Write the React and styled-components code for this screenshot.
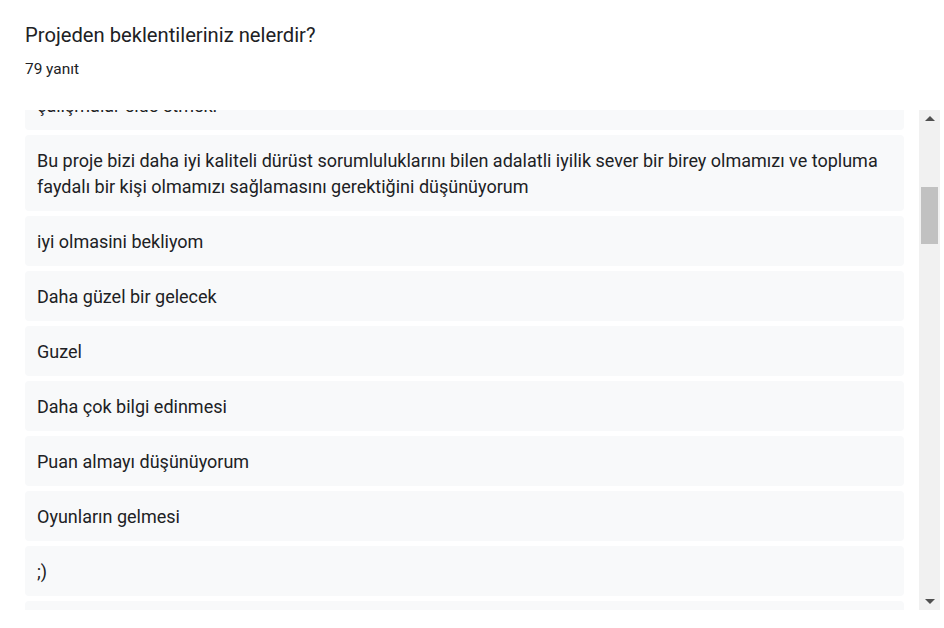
import React from 'react'
import styled, { createGlobalStyle } from 'styled-components'

const answers = [
    'çalışmalar elde etmek.',
    'Bu proje bizi daha iyi kaliteli dürüst sorumluluklarını bilen adalatli iyilik sever bir birey olmamızı ve topluma faydalı bir kişi olmamızı sağlamasını gerektiğini düşünüyorum',
    'iyi olmasini bekliyom',
    'Daha güzel bir gelecek',
    'Guzel',
    'Daha çok bilgi edinmesi',
    'Puan almayı düşünüyorum',
    'Oyunların gelmesi',
    ';)',
    'Güzel olması',
]

const App = () => {
    return (
        <>
            <GlobalStyle />
            <Page>
                <Header>
                    <Title>Projeden beklentileriniz nelerdir?</Title>
                    <Count>79 yanıt</Count>
                </Header>
                <Body>
                    <ListView>
                        <List>
                            {answers.map((a, i) => (
                                <Answer key={i}>{a}</Answer>
                            ))}
                        </List>
                    </ListView>
                    <ScrollBar>
                        <Arrow className="up" />
                        <Track>
                            <Thumb />
                        </Track>
                        <Arrow className="down" />
                    </ScrollBar>
                </Body>
            </Page>
        </>
    )
}

const GlobalStyle = createGlobalStyle`
    html, body {
        margin: 0;
        padding: 0;
        background: #fff;
    }
    body {
        font-family: Roboto, "Liberation Sans", Arial, sans-serif;
        color: #202124;
    }
`

const Page = styled.div`
    width: 944px;
    height: 628px;
    overflow: hidden;
    background: #fff;
`
const Header = styled.div`
    padding: 22px 0 0 25px;
    height: 110px;
    box-sizing: border-box;
`
const Title = styled.div`
    font-size: 20.2px;
    line-height: 26px;
    color: #202124;
`
const Count = styled.div`
    margin-top: 12px;
    font-size: 15.4px;
    line-height: 18px;
    color: #202124;
`
const Body = styled.div`
    display: flex;
    height: 500px;
`
const ListView = styled.div`
    flex: 1;
    overflow: hidden;
    padding: 0 15px 0 25px;
`
const List = styled.div`
    display: flex;
    flex-direction: column;
    gap: 5px;
    margin-top: -30px;
`
const Answer = styled.div`
    background: #f8f9fa;
    border-radius: 4px;
    padding: 13.25px 12px 11.25px;
    font-size: 18px;
    line-height: 25.5px;
    color: #202124;
`
const ScrollBar = styled.div`
    width: 21px;
    margin-right: 4px;
    background: #f1f1f1;
    display: flex;
    flex-direction: column;
`
const Arrow = styled.div`
    height: 17px;
    display: flex;
    justify-content: center;
    align-items: center;
    &::before {
        content: "";
        width: 0;
        height: 0;
        border-left: 5px solid transparent;
        border-right: 5px solid transparent;
    }
    &.up::before {
        border-bottom: 5px solid #505050;
    }
    &.down::before {
        border-top: 5px solid #505050;
    }
`
const Track = styled.div`
    flex: 1;
    padding: 60px 2px 0;
`
const Thumb = styled.div`
    height: 57px;
    background: #c1c1c1;
`

export default App
